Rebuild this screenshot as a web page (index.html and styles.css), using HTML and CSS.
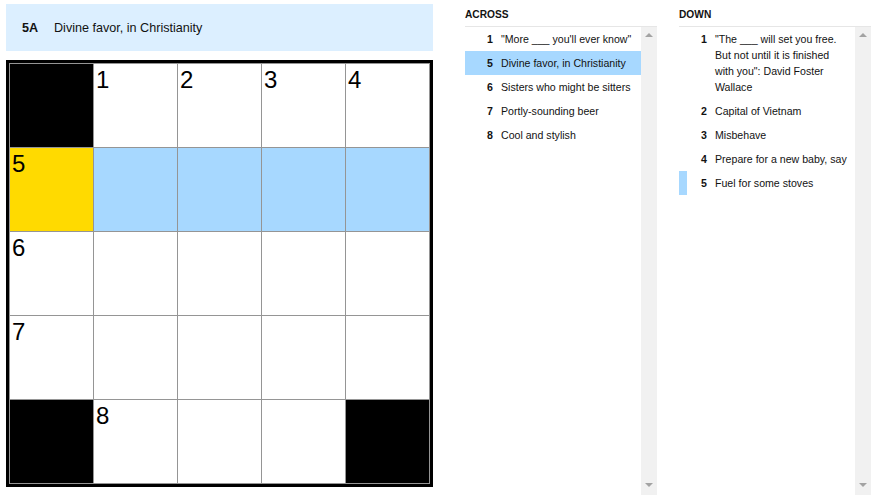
FILE: index.html
```html
<!DOCTYPE html>
<html>
<head>
<meta charset="utf-8">
<link rel="stylesheet" href="styles.css">
</head>
<body>
<div class="app">
  <div class="board">
    <div class="clue-bar"><span class="clue-label">5A</span><span class="clue-text">Divine favor, in Christianity</span></div>
    <div class="grid">
      <div class="cell black"></div>
      <div class="cell"><span class="num">1</span></div>
      <div class="cell"><span class="num">2</span></div>
      <div class="cell"><span class="num">3</span></div>
      <div class="cell"><span class="num">4</span></div>
      <div class="cell active"><span class="num">5</span></div>
      <div class="cell word"></div>
      <div class="cell word"></div>
      <div class="cell word"></div>
      <div class="cell word"></div>
      <div class="cell"><span class="num">6</span></div>
      <div class="cell"></div>
      <div class="cell"></div>
      <div class="cell"></div>
      <div class="cell"></div>
      <div class="cell"><span class="num">7</span></div>
      <div class="cell"></div>
      <div class="cell"></div>
      <div class="cell"></div>
      <div class="cell"></div>
      <div class="cell black"></div>
      <div class="cell"><span class="num">8</span></div>
      <div class="cell"></div>
      <div class="cell"></div>
      <div class="cell black"></div>
    </div>
  </div>

  <section class="panel">
    <h3 class="panel-title">ACROSS</h3>
    <div class="list-wrap">
      <ol class="clues">
        <li class="clue"><span class="n">1</span><span class="t">"More ___ you'll ever know"</span></li>
        <li class="clue selected"><span class="n">5</span><span class="t">Divine favor, in Christianity</span></li>
        <li class="clue"><span class="n">6</span><span class="t">Sisters who might be sitters</span></li>
        <li class="clue"><span class="n">7</span><span class="t">Portly-sounding beer</span></li>
        <li class="clue"><span class="n">8</span><span class="t">Cool and stylish</span></li>
      </ol>
      <div class="scrollbar"><span class="arrow up"></span><span class="arrow down"></span></div>
    </div>
  </section>

  <section class="panel">
    <h3 class="panel-title">DOWN</h3>
    <div class="list-wrap">
      <ol class="clues">
        <li class="clue"><span class="n">1</span><span class="t">"The ___ will set you free. But not until it is finished with you": David Foster Wallace</span></li>
        <li class="clue"><span class="n">2</span><span class="t">Capital of Vietnam</span></li>
        <li class="clue"><span class="n">3</span><span class="t">Misbehave</span></li>
        <li class="clue"><span class="n">4</span><span class="t">Prepare for a new baby, say</span></li>
        <li class="clue crossed"><span class="n">5</span><span class="t">Fuel for some stoves</span></li>
      </ol>
      <div class="scrollbar"><span class="arrow up"></span><span class="arrow down"></span></div>
    </div>
  </section>
</div>
</body>
</html>
```

FILE: styles.css
```css
* { box-sizing: border-box; }

html, body {
  margin: 0;
  padding: 0;
  background: #fff;
  font-family: "Liberation Sans", Arial, sans-serif;
  color: #121212;
  overflow: hidden;
}

.app {
  display: flex;
  height: 495px;
  padding-left: 6px;
}

.board {
  width: 427px;
  padding-top: 4px;
  display: flex;
  flex-direction: column;
  gap: 9px;
}

.clue-bar {
  height: 47px;
  background: #dcefff;
  display: flex;
  align-items: center;
  padding-left: 16px;
  font-size: 12.6px;
}

.clue-label {
  font-weight: bold;
  width: 32px;
}

.grid {
  width: 427px;
  height: 427px;
  border: 3px solid #000;
  background: #959595;
  padding: 1px;
  display: grid;
  grid-template-columns: repeat(5, 1fr);
  grid-template-rows: repeat(5, 1fr);
  gap: 1px;
}

.cell {
  background: #fff;
  position: relative;
}

.cell.black { background: #000; }
.cell.active { background: #ffda00; }
.cell.word { background: #a7d8ff; }

.num {
  position: absolute;
  left: 2px;
  top: 3px;
  font-size: 24px;
  line-height: 1.1;
  color: #000;
}

.panel {
  width: 192px;
  display: flex;
  flex-direction: column;
  margin-left: 32px;
}

.panel + .panel { margin-left: 22px; }

.panel-title {
  margin: 0;
  height: 27px;
  padding-top: 9px;
  font-size: 10.2px;
  font-weight: bold;
  border-bottom: 1px solid #e6e6e6;
}

.list-wrap {
  flex: 1;
  display: flex;
}

.clues {
  flex: 1;
  list-style: none;
  margin: 0;
  padding: 0;
}

.clue {
  display: flex;
  padding: 4px 6px 4px 0;
  border-left: 8px solid transparent;
  font-size: 10.6px;
  line-height: 16px;
}

.clue.selected { background: #a7d8ff; border-left-color: #a7d8ff; }
.clue.crossed { border-left-color: #a7d8ff; }

.clue .n {
  width: 20px;
  flex: none;
  text-align: right;
  font-weight: bold;
  margin-right: 8px;
}

.clue .t { flex: 1; }

.scrollbar {
  width: 16px;
  background: #f1f1f1;
  position: relative;
}

.arrow {
  position: absolute;
  left: 4px;
  width: 0;
  height: 0;
  border-left: 4px solid transparent;
  border-right: 4px solid transparent;
}

.arrow.up { top: 6px; border-bottom: 4px solid #a3a3a3; }
.arrow.down { bottom: 8px; border-top: 4px solid #a3a3a3; }
```
